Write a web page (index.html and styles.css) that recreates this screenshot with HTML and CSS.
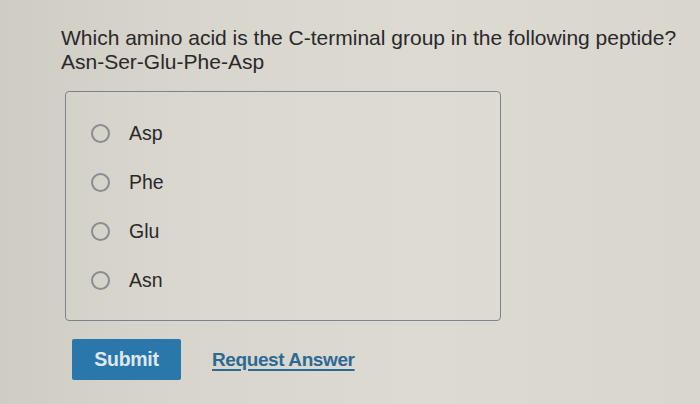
FILE: index.html
```html
<!DOCTYPE html>
<html>
<head>
<meta charset="utf-8">
<link rel="stylesheet" href="styles.css">
</head>
<body>
<div class="page">
  <div class="question">
    <p>Which amino acid is the C-terminal group in the following peptide?</p>
    <p>Asn-Ser-Glu-Phe-Asp</p>
  </div>
  <div class="choices">
    <label class="choice"><span class="radio"></span><span class="label">Asp</span></label>
    <label class="choice"><span class="radio"></span><span class="label">Phe</span></label>
    <label class="choice"><span class="radio"></span><span class="label">Glu</span></label>
    <label class="choice"><span class="radio"></span><span class="label">Asn</span></label>
  </div>
  <div class="actions">
    <button class="submit">Submit</button>
    <a class="request" href="#">Request Answer</a>
  </div>
</div>
</body>
</html>
```
FILE: styles.css
```css
html, body {
  margin: 0;
  padding: 0;
}
body {
  width: 700px;
  height: 404px;
  overflow: hidden;
  background: linear-gradient(90deg, #cfccc3 0%, #d8d5cc 25%, #dddad2 60%, #d9d6ce 100%);
  font-family: "Liberation Sans", Arial, sans-serif;
  color: #29292b;
}
.page {
  padding: 26px 0 0 61px;
}
.question p {
  margin: 0;
  font-size: 21px;
  line-height: 24px;
}
.choices {
  margin: 17px 0 0 4px;
  width: 436px;
  height: 230px;
  border: 1.5px solid #7e828a;
  border-radius: 4px;
  box-sizing: border-box;
  padding: 31px 0 0 25px;
  display: flex;
  flex-direction: column;
  gap: 29px;
  background: rgba(255,255,255,0.05);
}
.choice {
  display: flex;
  align-items: center;
  gap: 19px;
  height: 20px;
}
.radio {
  width: 19px;
  height: 19px;
  border: 2.5px solid #8a8c92;
  border-radius: 50%;
  box-sizing: border-box;
}
.label {
  font-size: 19.5px;
}
.actions {
  margin: 18px 0 0 11px;
  display: flex;
  align-items: center;
  gap: 31px;
}
.submit {
  width: 109px;
  height: 41px;
  border: none;
  border-radius: 2px;
  background: #2a77ab;
  color: #dfe8ec;
  font-family: "Liberation Sans", Arial, sans-serif;
  font-weight: bold;
  font-size: 19.5px;
  letter-spacing: -0.3px;
  padding: 0;
}
.request {
  color: #2c6a96;
  font-size: 19px;
  font-weight: bold;
  letter-spacing: -0.4px;
  text-decoration: underline;
  text-decoration-thickness: 2px;
  text-underline-offset: 3px;
}
```
